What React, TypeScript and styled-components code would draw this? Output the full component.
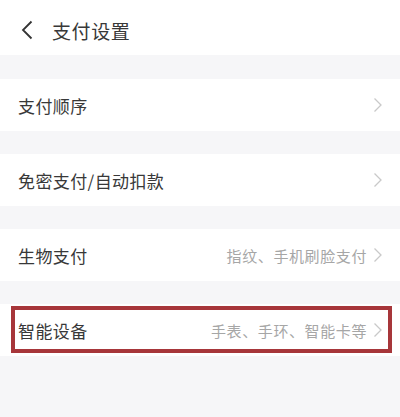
import React from "react";
import styled, { createGlobalStyle } from "styled-components";

const Global = createGlobalStyle`
  html, body { margin: 0; padding: 0; background: #f6f6f8; }
  body { font-family: "Noto Sans CJK SC", "Noto Sans", sans-serif; }
`;

const Page = styled.div`
  width: 400px;
  min-height: 417px;
  background: #f6f6f8;
  display: flex;
  flex-direction: column;
`;

const Header = styled.div`
  height: 55px;
  box-sizing: border-box;
  padding: 5px 0 0 21px;
  background: #fff;
  display: flex;
  align-items: center;
  gap: 19px;
  margin-bottom: 24px;
`;

const Title = styled.div`
  font-size: 19px;
  color: #383838;
  letter-spacing: 0.6px;
`;

const Row = styled.div<{ $gapAfter: number }>`
  position: relative;
  height: 52px;
  background: #fff;
  display: flex;
  align-items: center;
  padding: 0 17px 0 18px;
  margin-bottom: ${(p) => p.$gapAfter}px;
`;

const Label = styled.div`
  flex: 1;
  font-size: 17px;
  color: #383838;
  letter-spacing: 0.4px;
`;

const Hint = styled.div`
  font-size: 15px;
  color: #a6a6a6;
  margin-right: 6px;
  letter-spacing: 0.6px;
`;

const Highlight = styled.div`
  position: absolute;
  left: 11px;
  right: 8px;
  top: 2px;
  bottom: 3px;
  border: 4px solid #a7363a;
  pointer-events: none;
`;

const Chevron = ({ color = "#c9c9c9" }: { color?: string }) => (
  <svg width="10" height="16" viewBox="0 0 10 16">
    <path d="M1.5 1.5 L8 8 L1.5 14.5" fill="none" stroke={color} strokeWidth="1.3" />
  </svg>
);

const Back = () => (
  <svg width="12" height="20" viewBox="0 0 12 20">
    <path d="M10.5 1.5 L2 10 L10.5 18.5" fill="none" stroke="#333" strokeWidth="1.8" />
  </svg>
);

const rows = [
  { label: "支付顺序", hint: "", gap: 23 },
  { label: "免密支付/自动扣款", hint: "", gap: 23 },
  { label: "生物支付", hint: "指纹、手机刷脸支付", gap: 23 },
  { label: "智能设备", hint: "手表、手环、智能卡等", gap: 0, hl: true },
];

export default function App() {
  return (
    <Page>
      <Global />
      <Header>
        <Back />
        <Title>支付设置</Title>
      </Header>
      {rows.map((r) => (
        <Row key={r.label} $gapAfter={r.gap}>
          <Label>{r.label}</Label>
          {r.hint && <Hint>{r.hint}</Hint>}
          <Chevron />
          {r.hl && <Highlight />}
        </Row>
      ))}
    </Page>
  );
}
